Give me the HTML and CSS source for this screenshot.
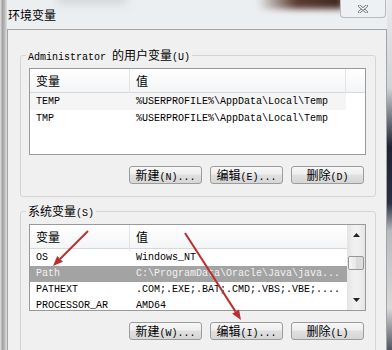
FILE: index.html
```html
<!DOCTYPE html>
<html lang="zh-CN">
<head>
    <meta charset="UTF-8">
    <title>环境变量</title>
    <link rel="stylesheet" href="styles.css">
</head>
<body>
    <div class="edge-left"></div>

    <div class="window">
        <div class="titlebar">
            <div class="glass-blur"></div>
            <div class="glass-haze"></div>
            <span class="title zh">环境变量</span>
            <div class="close-btn">
                <svg width="10" height="8" viewBox="0 0 10 8">
                    <path d="M1.5 1 L8.5 7 M8.5 1 L1.5 7" stroke="#6a6a6a" stroke-width="2.8" stroke-linecap="round"/>
                    <path d="M1.5 1 L8.5 7 M8.5 1 L1.5 7" stroke="#ffffff" stroke-width="1.3" stroke-linecap="round"/>
                </svg>
            </div>
        </div>

        <div class="client">
            <!-- 用户变量 -->
            <fieldset class="group">
                <legend>Administrator <span class="zh">的用户变量</span>(U)</legend>
                <div class="list">
                    <div class="list-main">
                        <div class="list-head">
                            <div><span class="zh">变量</span></div>
                            <div><span class="zh">值</span></div>
                            <div></div>
                        </div>
                        <div class="list-body">
                            <div class="row faint">
                                <div>TEMP</div>
                                <div>%USERPROFILE%\AppData\Local\Temp</div>
                            </div>
                            <div class="row">
                                <div>TMP</div>
                                <div>%USERPROFILE%\AppData\Local\Temp</div>
                            </div>
                        </div>
                    </div>
                </div>
                <div class="buttons">
                    <div class="btn"><span class="zh">新建</span>(N)...</div>
                    <div class="btn"><span class="zh">编辑</span>(E)...</div>
                    <div class="btn"><span class="zh">删除</span>(D)</div>
                </div>
            </fieldset>

            <!-- 系统变量 -->
            <fieldset class="group sys">
                <legend><span class="zh">系统变量</span>(S)</legend>
                <div class="list">
                    <div class="list-main">
                        <div class="list-head">
                            <div><span class="zh">变量</span></div>
                            <div><span class="zh">值</span></div>
                        </div>
                        <div class="list-body">
                            <div class="row">
                                <div>OS</div>
                                <div>Windows_NT</div>
                            </div>
                            <div class="row selected">
                                <div>Path</div>
                                <div>C:\ProgramData\Oracle\Java\java...</div>
                            </div>
                            <div class="row">
                                <div>PATHEXT</div>
                                <div>.COM;.EXE;.BAT;.CMD;.VBS;.VBE;....</div>
                            </div>
                            <div class="row">
                                <div>PROCESSOR_AR</div>
                                <div>AMD64</div>
                            </div>
                        </div>
                    </div>
                    <div class="scrollbar">
                        <div class="sb-btn">
                            <svg width="7" height="4" viewBox="0 0 7 4"><path d="M0 4 L3.5 0 L7 4 Z" fill="#222"/></svg>
                        </div>
                        <div class="sb-track"><div class="thumb"></div></div>
                        <div class="sb-btn">
                            <svg width="7" height="4" viewBox="0 0 7 4"><path d="M0 0 L3.5 4 L7 0 Z" fill="#222"/></svg>
                        </div>
                    </div>
                </div>
                <div class="buttons">
                    <div class="btn"><span class="zh">新建</span>(W)...</div>
                    <div class="btn"><span class="zh">编辑</span>(I)...</div>
                    <div class="btn"><span class="zh">删除</span>(L)</div>
                </div>
            </fieldset>
        </div>
    </div>

    <div class="edge-right"></div>

    <!-- 标注箭头 -->
    <svg class="arrows" width="392" height="350" viewBox="0 0 392 350">
        <line x1="88" y1="231" x2="60" y2="259" stroke="#b8312f" stroke-width="2"/>
        <polygon points="53,266 62.9,261.8 57.2,256.1" fill="#b8312f"/>
        <line x1="185" y1="233" x2="235.6" y2="311.6" stroke="#b8312f" stroke-width="2"/>
        <polygon points="241,320 232.2,313.8 239,309.4" fill="#b8312f"/>
    </svg>
</body>
</html>
```

FILE: styles.css
```css
* {
    box-sizing: border-box;
}

html, body {
    margin: 0;
}

body {
    width: 392px;
    height: 350px;
    overflow: hidden;
    display: flex;
    position: relative;
    background: #e9ecee;
    font-family: "Liberation Mono", monospace;
    font-size: 10px;
    color: #000;
}

.zh {
    font-family: "Noto Sans CJK SC", sans-serif;
    font-size: 12px;
}

.edge-left {
    width: 7px;
    background: linear-gradient(90deg, #e4e4e4 0, #a2a2a2 35%, #b4b4b4 60%, #e0e0e0 100%);
}

.edge-right {
    width: 5px;
    background: linear-gradient(180deg, #e8eaec 0, #cfd2d6 25%, #1d2333 42%, #283044 58%, #b7babf 66%, #d8d8d8 88%, #505561 100%);
}

.window {
    width: 380px;
    display: flex;
    flex-direction: column;
}

.titlebar {
    flex: 0 0 29px;
    height: 29px;
    display: flex;
    align-items: flex-start;
    position: relative;
    background: #eceff1;
}

.title {
    flex: 1;
    padding-left: 1px;
    line-height: 29px;
    position: relative;
}

.glass-blur {
    position: absolute;
    left: 250px;
    top: -9px;
    width: 86px;
    height: 18px;
    background: linear-gradient(90deg, rgba(90,58,46,0) 0, #5b3c30 45%, #3e2820 100%);
    filter: blur(3px);
}

.glass-haze {
    position: absolute;
    left: 50px;
    top: -8px;
    width: 70px;
    height: 12px;
    background: #d2d5d7;
    filter: blur(5px);
}

.close-btn {
    width: 46px;
    height: 18px;
    margin-right: 1px;
    border: 1px solid #b8babc;
    border-top: 0;
    border-radius: 0 0 4px 4px;
    background: #eef1f3;
    display: flex;
    align-items: center;
    justify-content: center;
    position: relative;
}

.client {
    flex: 1 1 auto;
    min-height: 0;
    overflow: hidden;
    background: #f0f0f0;
    border: 1px solid #a4a4a4;
    border-bottom: 0;
    padding: 0 10px 0 12px;
}

.group {
    margin: 18px 0 0;
    padding: 6px 9px 12px 8px;
    border: 1px solid #d5d5d5;
    border-radius: 3px;
    min-width: 0;
}

.group.sys {
    margin-top: 7px;
}

.group legend {
    margin-left: -3px;
    padding: 0 2px;
    height: 14px;
    line-height: 14px;
}

.list {
    height: 87px;
    border: 1px solid #999a9b;
    background: #fff;
    display: flex;
    overflow: hidden;
}

.list-main {
    flex: 1;
    min-width: 0;
}

.list-head {
    display: grid;
    grid-template-columns: 100px 216px 1fr;
    height: 24px;
    border-bottom: 1px solid #d8d8d8;
    background: linear-gradient(#ffffff, #f4f5f7);
}

.list-head > div {
    border-right: 1px solid #e2e4e7;
    padding-left: 6px;
    line-height: 23px;
}

.list-head > div:last-child {
    border-right: 0;
}

.row {
    display: grid;
    grid-template-columns: 100px 216px 1fr;
    height: 17px;
    line-height: 17px;
}

.row > div {
    padding-left: 6px;
    white-space: nowrap;
    overflow: hidden;
}

.row.faint > div {
    background: #f5f5f5;
}

.sys .list-body {
    padding-top: 1px;
}

.sys .row {
    height: 16px;
    line-height: 16px;
}

.row.selected {
    background: #a3a3a3;
    color: #f2f2f2;
}

.scrollbar {
    width: 18px;
    display: flex;
    flex-direction: column;
    background: linear-gradient(90deg, #e4e4e4, #f1f1f1 40%, #f1f1f1 60%, #e4e4e4);
}

.sb-btn {
    height: 20px;
    display: flex;
    align-items: center;
    justify-content: center;
}

.sb-track {
    flex: 1;
    padding-top: 11px;
}

.thumb {
    height: 14px;
    margin: 0 1px;
    border: 1px solid #979797;
    border-radius: 2px;
    background: linear-gradient(90deg, #f4f4f4, #e8e8e8 50%, #dadada 50%, #dedede);
}

.buttons {
    display: flex;
    justify-content: flex-end;
    gap: 8px;
    margin-top: 11px;
    padding-right: 2px;
}

.btn {
    width: 73px;
    height: 18px;
    border: 1px solid #9c9c9c;
    border-radius: 3px;
    background: linear-gradient(#f7f7f7, #eeeeee 45%, #e0e0e0 50%, #d6d6d6);
    line-height: 16px;
    text-align: center;
    white-space: nowrap;
}

.arrows {
    position: absolute;
    left: 0;
    top: 0;
    pointer-events: none;
}
```
